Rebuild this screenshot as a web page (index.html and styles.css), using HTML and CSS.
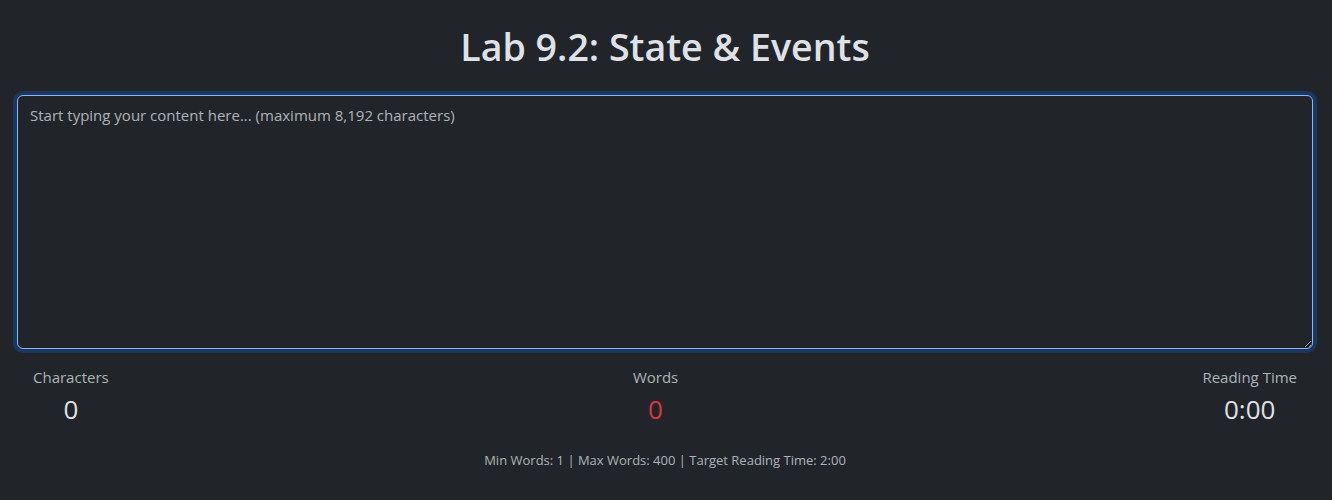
FILE: index.html
```html
<!DOCTYPE html>
<html lang="en">
<head>
<meta charset="utf-8">
<title>Lab 9.2: State &amp; Events</title>
<link rel="stylesheet" href="styles.css">
</head>
<body>
<main class="page">
  <h1 class="title">Lab 9.2: State &amp; Events</h1>
  <textarea class="editor" placeholder="Start typing your content here... (maximum 8,192 characters)"></textarea>
  <div class="stats">
    <div class="stat">
      <div class="stat-label">Characters</div>
      <div class="stat-value">0</div>
    </div>
    <div class="stat">
      <div class="stat-label">Words</div>
      <div class="stat-value danger">0</div>
    </div>
    <div class="stat">
      <div class="stat-label">Reading Time</div>
      <div class="stat-value">0:00</div>
    </div>
  </div>
  <p class="limits">Min Words: 1 | Max Words: 400 | Target Reading Time: 2:00</p>
</main>
</body>
</html>
```
FILE: styles.css
```css
html, body {
  margin: 0;
  padding: 0;
  background: #212529;
}
body {
  font-family: "Open Sans", "Noto Sans", sans-serif;
  color: #dee2e6;
  font-size: 16px;
  line-height: 1.5;
}
.page {
  padding: 23px 19px 0 17px;
  display: flex;
  flex-direction: column;
}
.title {
  margin: 0 0 24px;
  text-align: center;
  font-size: 37.6px;
  font-weight: 600;
  line-height: 48px;
  color: #dee2e6;
}
.editor {
  display: block;
  box-sizing: border-box;
  width: 100%;
  height: 254px;
  margin: 0;
  padding: 7px 12px 6px;
  font-family: inherit;
  font-size: 15px;
  line-height: 24px;
  color: #dee2e6;
  background: #212529;
  border: 1px solid #86b7fe;
  border-radius: 6px;
  box-shadow: 0 0 0 4px rgba(13, 110, 253, 0.25);
  outline: none;
  resize: vertical;
}
.editor::placeholder {
  color: rgba(222, 226, 230, 0.75);
}
.stats {
  display: flex;
  justify-content: space-between;
  padding: 0 16px;
  margin-top: 17px;
}
.stat {
  text-align: center;
}
.stat-label {
  font-size: 15px;
  line-height: 22px;
  color: rgba(222, 226, 230, 0.75);
}
.stat-value {
  margin-top: 3px;
  font-size: 26px;
  line-height: 36px;
  font-weight: 400;
}
.stat-value.danger {
  color: #dc3545;
}
.limits {
  margin: 23px 0 0;
  text-align: center;
  font-size: 13px;
  line-height: 20px;
  color: rgba(222, 226, 230, 0.75);
}
```
